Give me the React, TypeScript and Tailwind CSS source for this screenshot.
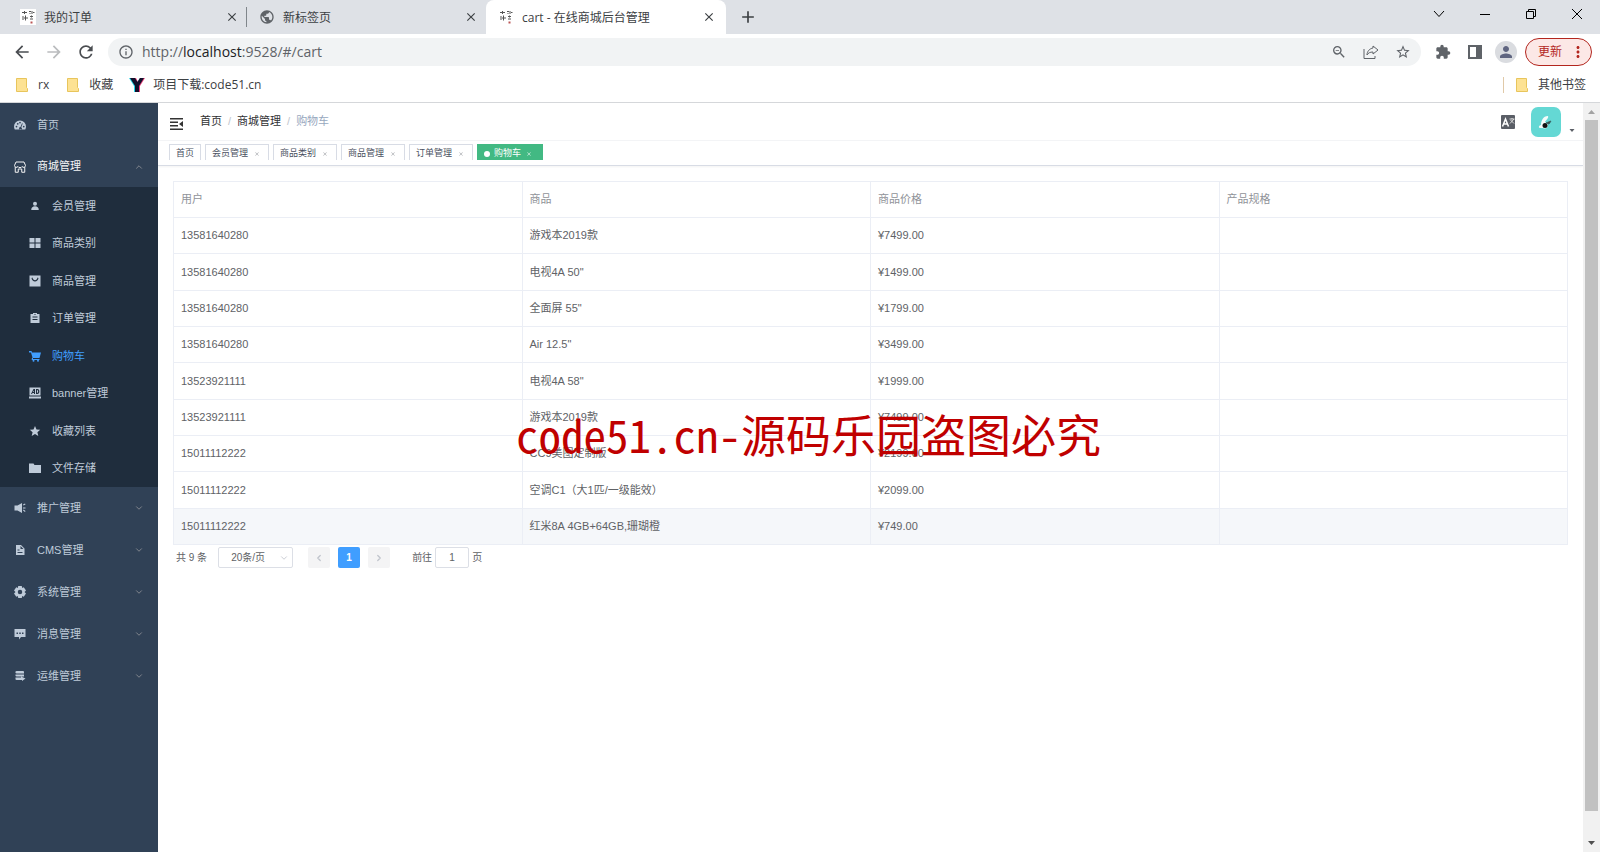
import type { ReactNode } from 'react'
import {
  MdAdd,
  MdArrowBack,
  MdArrowForward,
  MdClose,
  MdExtension,
  MdInfoOutline,
  MdMoreVert,
  MdPerson,
  MdPublic,
  MdRefresh,
  MdStarBorder,
  MdZoomOut,
} from 'react-icons/md'
import { ChevronDown, ChevronLeft, ChevronRight, ChevronUp } from 'lucide-react'

const rows = [
  ['13581640280', '游戏本2019款', '¥7499.00', ''],
  ['13581640280', '电视4A 50"', '¥1499.00', ''],
  ['13581640280', '全面屏 55"', '¥1799.00', ''],
  ['13581640280', 'Air 12.5"', '¥3499.00', ''],
  ['13523921111', '电视4A 58"', '¥1999.00', ''],
  ['13523921111', '游戏本2019款', '¥7499.00', ''],
  ['15011112222', 'CC9美图定制版', '¥2199.00', ''],
  ['15011112222', '空调C1（大1匹/一级能效）', '¥2099.00', ''],
  ['15011112222', '红米8A 4GB+64GB,珊瑚橙', '¥749.00', ''],
]

const Svg = ({ children, className = 'w-3 h-3' }: { children: ReactNode; className?: string }) => (
  <svg viewBox="0 0 24 24" fill="currentColor" className={className} aria-hidden="true">
    {children}
  </svg>
)

const icons: Record<string, ReactNode> = {
  home: (
    <Svg>
      <path
        fillRule="evenodd"
        d="M12 3a12 12 0 0 0-12 12c0 2 .5 4 1.500 6h21c1-2 1.500-4 1.500-6A12 12 0 0 0 12 3zM5 13.500a1.700 1.700 0 1 1 0 3.400 1.700 1.700 0 0 1 0-3.400zM7.500 8a1.700 1.700 0 1 1 0 3.400A1.700 1.700 0 0 1 7.500 8zM12 5.500a1.700 1.700 0 1 1 0 3.400 1.700 1.700 0 0 1 0-3.400zM16 8.500l1.500.7-3 7.500a2.800 2.800 0 1 1-1.500-.5zM19.500 13.500a1.700 1.700 0 1 1 0 3.400 1.700 1.700 0 0 1 0-3.400z"
      />
    </Svg>
  ),
  shop: (
    <Svg>
      <path
        fill="none"
        stroke="currentColor"
        strokeWidth="2"
        d="M4 2h16l3 7c0 4-5 5-7 2-1 3-7 3-8 0-2 3-7 2-7-2zM2.500 12v10.500h6V16h7v6.500h6V12"
      />
    </Svg>
  ),
  member: (
    <Svg>
      <circle cx="12" cy="7.500" r="4" />
      <path d="M4.500 20c0-5 3-7.500 7.500-7.500s7.500 2.500 7.500 7.500z" />
    </Svg>
  ),
  category: (
    <Svg>
      <path d="M1 2h10v9H1zM13 2h10v9H13zM1 13h10v9H1zM13 13h10v9H13z" />
    </Svg>
  ),
  goods: (
    <Svg>
      <path fillRule="evenodd" d="M1 1h22v22H1zM5 6c1 9 13 9 14 0l-2-1c-1 7-9 7-10 0z" />
    </Svg>
  ),
  order: (
    <Svg>
      <path fillRule="evenodd" d="M8 4V2h8v2h5v18H3V4zM7 9v2h10V9zM7 14v2h10v-2zM10 4v1h4V4z" />
    </Svg>
  ),
  cart: (
    <Svg>
      <path d="M0 2h5l1 3h18l-3 11H8v2h13v2H6l-1-2 2-3L4 5H0z" />
      <circle cx="9" cy="21.500" r="2" />
      <circle cx="18" cy="21.500" r="2" />
    </Svg>
  ),
  banner: (
    <Svg>
      <path
        fillRule="evenodd"
        d="M1 1h22v16H1zM4 14h2l1-2h3v2h2V4H9zM8 10l2-3v3zM14 4v10h3c5 0 5-10 0-10zM16 6c3 0 3 6 0 6z"
      />
      <path d="M0 19h24v4H0z" />
    </Svg>
  ),
  star: (
    <Svg>
      <path d="M12 2l3 7 7.500.6-5.700 5 1.800 7.400L12 18l-6.600 4 1.800-7.400-5.700-5L9 9z" />
    </Svg>
  ),
  folder: (
    <Svg>
      <path d="M0 3h9l2 3h13v16H0z" />
    </Svg>
  ),
  promote: (
    <Svg>
      <path d="M16 2v20L7 17H1V7h6zM18 5l4-2 1 2-4 2zM18 11h5v2h-5zM18 17l1-2 4 3-1 2z" />
    </Svg>
  ),
  cms: (
    <Svg>
      <path fillRule="evenodd" d="M4 2h10l7 7v13H4zM13 4v6h6zM7 11v2h4v-2zM7 16v2h10v-2z" />
    </Svg>
  ),
  system: (
    <Svg>
      <path
        fillRule="evenodd"
        d="M8.500 0h7l1 4 3-1.500L24 9l-3 3 3 3-4.500 6.500-3-1.500-1 4h-7l-1-4-3 1.500L0 15l3-3-3-3 4.500-6.500 3 1.500zM12 7.500a4.500 4.500 0 1 0 0 9 4.500 4.500 0 0 0 0-9z"
      />
    </Svg>
  ),
  message: (
    <Svg>
      <path fillRule="evenodd" d="M1 2h22v16h-9l-4 5v-5H1zM5 9v3h3V9zM10.500 9v3h3V9zM16 9v3h3V9z" />
    </Svg>
  ),
  ops: (
    <Svg>
      <path d="M3 3l2-1h13l2 1v4H5L3 6zM3 9h17v4H5l-2-1zM3 15h11v-2l9 4-7 5v-2H5l-2-1z" />
    </Svg>
  ),
}

const shopMenu = [
  { name: '会员管理', icon: 'member' },
  { name: '商品类别', icon: 'category' },
  { name: '商品管理', icon: 'goods' },
  { name: '订单管理', icon: 'order' },
  { name: '购物车', icon: 'cart', active: true },
  { name: 'banner管理', icon: 'banner' },
  { name: '收藏列表', icon: 'star' },
  { name: '文件存储', icon: 'folder' },
]

const otherMenus = [
  { name: '推广管理', icon: 'promote' },
  { name: 'CMS管理', icon: 'cms' },
  { name: '系统管理', icon: 'system' },
  { name: '消息管理', icon: 'message' },
  { name: '运维管理', icon: 'ops' },
]

const SealIcon = () => (
  <svg viewBox="0 0 16 16" className="w-4 h-4" fill="none" stroke="#555" aria-hidden="true">
    <path d="M2 3.500h5M4.500 2v3M9 2.500h2M9.500 4.500h1M12 2v3M13 3.500h1.500M2 8h2M2 10h2M5.500 6.500v5M4 9h4M10 7.500h3M11.500 6.500v2M10 10h3" />
    <path d="M10.500 13.500h2" stroke="#b55" strokeWidth="2" />
  </svg>
)

const FolderIcon = () => (
  <svg viewBox="0 0 12 14" className="w-3 h-3.5" aria-hidden="true">
    <path d="M.5.5h10v9l1 1v3H.5z" fill="#fde293" stroke="#e8c55c" />
  </svg>
)

function BrowserTab({ title, icon, active = false }: { title: string; icon: ReactNode; active?: boolean }) {
  return (
    <div
      className={
        active
          ? 'w-60 h-full flex items-center pl-3 pr-2.5 bg-white rounded-t-lg'
          : 'w-[239px] h-full flex items-center pl-3 pr-2'
      }
    >
      {icon}
      <span className="flex-1 ml-2 pt-0.5 whitespace-nowrap">{title}</span>
      <button aria-label="关闭标签页">
        <MdClose className="w-3.5 h-3.5" />
      </button>
    </div>
  )
}

function Browser() {
  return (
    <header className="font-['Open_Sans','Noto_Sans_CJK_SC',sans-serif] text-xs text-[#3c4043]">
      <div className="h-[34px] bg-[#dee1e6] flex items-center">
        <div className="flex h-full items-center pl-2">
          <BrowserTab
            title="我的订单"
            icon={
              <span className="bg-white">
                <SealIcon />
              </span>
            }
          />
          <span className="w-px h-5 -ml-px bg-[#80868b]" />
          <BrowserTab title="新标签页" icon={<MdPublic className="w-4 h-4 text-[#5f6368]" />} />
          <BrowserTab title="cart - 在线商城后台管理" icon={<SealIcon />} active />
        </div>
        <button className="ml-3" aria-label="新建标签页">
          <MdAdd className="w-5 h-5" />
        </button>
        <div className="ml-auto flex -mt-1.5 text-black">
          <button className="w-[46px] flex justify-center items-center" aria-label="搜索标签页">
            <svg viewBox="0 0 12 12" className="w-3 h-3" fill="none" stroke="currentColor">
              <path d="M1 3l5 5.500L11 3" />
            </svg>
          </button>
          <button className="w-[46px] flex justify-center items-center" aria-label="最小化">
            <svg viewBox="0 0 12 12" className="w-3 h-3" fill="none" stroke="currentColor">
              <path d="M1 6.500h10" />
            </svg>
          </button>
          <button className="w-[46px] flex justify-center items-center" aria-label="还原">
            <svg viewBox="0 0 12 12" className="w-3 h-3" fill="none" stroke="currentColor">
              <path d="M1.500 3.500h7v7h-7zM3.500 3.500v-2h7v7h-2" />
            </svg>
          </button>
          <button className="w-[46px] flex justify-center items-center" aria-label="关闭">
            <svg viewBox="0 0 12 12" className="w-3 h-3" fill="none" stroke="currentColor">
              <path d="M1 1l10 10M11 1L1 11" />
            </svg>
          </button>
        </div>
      </div>

      <div className="h-[35px] flex items-center pl-3 pr-2 text-[#5f6368]">
        <button aria-label="后退">
          <MdArrowBack className="w-5 h-5 text-[#4a4d51]" />
        </button>
        <button className="ml-3" aria-label="前进">
          <MdArrowForward className="w-5 h-5 text-[#babcbe]" />
        </button>
        <button className="ml-3" aria-label="重新加载">
          <MdRefresh className="w-5 h-5 text-[#4a4d51]" />
        </button>
        <div className="flex-1 h-7 ml-3 pl-2.5 pr-2.5 rounded-full bg-[#f1f3f4] flex items-center">
          <MdInfoOutline className="w-4 h-4" />
          <span className="flex-1 ml-2 text-sm">
            http://<span className="text-[#202124]">localhost</span>:9528/#/cart
          </span>
          <div className="flex gap-4">
            <MdZoomOut className="w-4 h-4" />
            <svg viewBox="0 0 16 16" className="w-4 h-4" fill="none" stroke="currentColor" strokeLinejoin="round">
              <path d="M1 5v9.500h11V12" />
              <path d="M10 2l5 4-5 4V8C7 8 5 9 4 11c0-4 3-6.500 6-7z" />
            </svg>
            <MdStarBorder className="w-4 h-4" />
          </div>
        </div>
        <MdExtension className="w-4 h-4 ml-3.5" />
        <svg viewBox="0 0 16 16" className="w-4 h-4 ml-4" aria-hidden="true">
          <path fillRule="evenodd" fill="currentColor" d="M1 1h14v14H1zM3 3v10h6V3z" />
        </svg>
        <span className="ml-3 w-[22px] h-[22px] rounded-full bg-[#dadce0] flex items-center justify-center">
          <MdPerson className="w-[18px] h-[18px] text-[#5f6580]" />
        </span>
        <button className="ml-2 h-7 w-[67px] pl-3 pr-1 rounded-full border border-[#b3261e] bg-[#fce8e6] text-[#b3261e] flex items-center justify-between">
          更新
          <MdMoreVert className="w-[18px] h-[18px]" />
        </button>
      </div>

      <div className="h-[34px] border-b border-[#d5d7da] pl-4 pr-3.5 pb-0.5 flex items-center">
        <a href="#" className="flex items-center gap-2.5">
          <FolderIcon />
          rx
        </a>
        <a href="#" className="ml-[18px] flex items-center gap-2.5">
          <FolderIcon />
          收藏
        </a>
        <a href="#" className="ml-4 flex items-center gap-2">
          <svg viewBox="0 0 16 16" className="w-4 h-4" aria-hidden="true">
            <path d="M0 1h5l3 4 3-4h4l-5 7v7H5V9z" fill="#25d6e8" />
            <path d="M2 1h5l2 4 2-4h5l-5 8v6H7V9z" fill="#f0407c" />
            <path d="M1 1h5l2.500 4L11 1h4l-5 8v6H6V9z" fill="#12102c" />
          </svg>
          项目下载:code51.cn
        </a>
        <a href="#" className="ml-auto h-4 pl-3 border-l border-[#e0c9a8] flex items-center gap-2.5">
          <FolderIcon />
          其他书签
        </a>
      </div>
    </header>
  )
}

function Sidebar() {
  return (
    <nav className="w-[158px] shrink-0 pt-px bg-[#304156] text-[#bfcbd9]">
      <a href="#" className="h-[42px] pl-3.5 flex items-center gap-[11px]">
        {icons.home}
        首页
      </a>
      <button className="w-full h-[41px] pl-3.5 pr-3.5 flex items-center gap-[11px] text-[#f4f4f5]">
        {icons.shop}
        <span className="flex-1 text-left">商城管理</span>
        <ChevronUp className="w-2.5 h-2.5 text-[#909399]" strokeWidth={2} />
      </button>
      <ul className="h-[300px] flex flex-col bg-[#1f2d3d]">
        {shopMenu.map((m) => (
          <li key={m.name} className="flex-1 flex">
            <a
              href="#"
              className={
                m.active
                  ? 'flex-1 pl-[29px] flex items-center gap-[11px] text-[#409eff]'
                  : 'flex-1 pl-[29px] flex items-center gap-[11px]'
              }
            >
              {icons[m.icon]}
              {m.name}
            </a>
          </li>
        ))}
      </ul>
      {otherMenus.map((m) => (
        <button key={m.name} className="w-full h-[42px] pl-3.5 pr-3.5 flex items-center gap-[11px]">
          {icons[m.icon]}
          <span className="flex-1 text-left">{m.name}</span>
          <ChevronDown className="w-2.5 h-2.5 text-[#909399]" strokeWidth={2} />
        </button>
      ))}
    </nav>
  )
}

function Navbar() {
  return (
    <div className="h-[38px] pl-3 pr-[7px] flex items-center border-b border-[#f3f4f6]">
      <button aria-label="收起菜单" className="mt-1">
        <svg viewBox="0 0 14 12" className="w-3.5 h-3" fill="#333" aria-hidden="true">
          <path d="M0 0h13v1.500H0zM0 3.500h8V5H0zM0 7h8v1.500H0zM0 10.500h13V12H0zM13 3v6L9 6z" />
        </svg>
      </button>
      <div className="ml-4 flex gap-1.5 text-[#303133]">
        <a href="#">首页</a>
        <span className="text-[#c0c4cc]">/</span>
        <a href="#">商城管理</a>
        <span className="text-[#c0c4cc]">/</span>
        <span className="text-[#97a8be]">购物车</span>
      </div>
      <button className="ml-auto" aria-label="语言">
        <svg viewBox="0 0 14 14" className="w-3.5 h-3.5" aria-hidden="true">
          <rect width="14" height="14" rx="1" fill="#5a5e66" />
          <path d="M1.500 11.500L4.500 4l3 7.500M3 9h3" fill="none" stroke="#fff" strokeWidth="1.500" />
          <path d="M8.500 4h5M11 3v1M9 8.500L13 4M9.500 5L13 8.500" fill="none" stroke="#ddd" />
        </svg>
      </button>
      <button className="ml-4 flex items-end gap-[7px]" aria-label="用户菜单">
        <svg viewBox="0 0 30 30" className="w-[30px] h-[30px]" aria-hidden="true">
          <rect width="30" height="30" rx="7" fill="#64d8d4" />
          <path d="M9 21c-2 0-1-3 1-3 0-4 2-9 7-9 1 2-2 4-3 6l3 2-1 4c-3 1-4 0-7 0z" fill="#f4fbfa" />
          <circle cx="14" cy="18.500" r="2.500" fill="#111" />
          <path d="M15 16l5-2-2 3z" fill="#333" stroke="#3a6a6a" />
        </svg>
        <svg viewBox="0 0 8 8" className="w-2 h-2 mb-0.5" fill="#5a5e66" aria-hidden="true">
          <path d="M1.500 2h5L4 5z" />
        </svg>
      </button>
    </div>
  )
}

function TagsView() {
  return (
    <div className="h-[25px] pl-[11px] pt-[3px] border-b border-[#d8dce5] shadow-xs text-[9px] text-[#495060]">
      <div className="h-4 flex gap-1 overflow-hidden">
        <a href="#" className="h-5 w-8 flex items-center justify-center border border-[#d8dce5]">
          首页
        </a>
        {['会员管理', '商品类别', '商品管理', '订单管理'].map((t) => (
          <a key={t} href="#" className="h-5 w-16 pl-1.5 pr-2 flex items-center justify-between border border-[#d8dce5]">
            {t}
            <MdClose className="w-1.5 h-1.5 text-[#909399]" />
          </a>
        ))}
        <a
          href="#"
          className="h-5 w-[66px] pl-1.5 pr-2.5 flex items-center border border-[#42b983] bg-[#42b983] text-white"
        >
          <span className="w-1.5 h-1.5 rounded-full bg-white mr-1" />
          <span className="flex-1">购物车</span>
          <MdClose className="w-1.5 h-1.5" />
        </a>
      </div>
    </div>
  )
}

function Pagination() {
  return (
    <div className="mt-0.5 pl-[3px] flex items-center text-[10px] text-[#606266]">
      <span>共 9 条</span>
      <div className="relative ml-[11px]">
        <select
          aria-label="每页条数"
          className="appearance-none block w-[75px] h-[21px] pl-3 border border-[#dcdfe6] rounded-xs bg-white"
        >
          <option>20条/页</option>
        </select>
        <ChevronDown className="absolute right-1 top-1.5 w-2.5 h-2.5 text-[#c0c4cc]" strokeWidth={2} />
      </div>
      <div className="ml-[15px] flex gap-2">
        <button
          disabled
          aria-label="上一页"
          className="w-[22px] h-[21px] rounded-xs bg-[#f4f4f5] flex items-center justify-center text-[#c0c4cc]"
        >
          <ChevronLeft className="w-2.5 h-2.5" strokeWidth={3} />
        </button>
        <button className="w-[22px] h-[21px] rounded-xs bg-[#409eff] text-white font-bold">1</button>
        <button
          disabled
          aria-label="下一页"
          className="w-[22px] h-[21px] rounded-xs bg-[#f4f4f5] flex items-center justify-center text-[#c0c4cc]"
        >
          <ChevronRight className="w-2.5 h-2.5" strokeWidth={3} />
        </button>
      </div>
      <label className="ml-[22px] flex items-center gap-[3px]">
        前往
        <input
          defaultValue="1"
          className="w-[34px] h-[21px] border border-[#dcdfe6] rounded-xs text-center"
        />
        页
      </label>
    </div>
  )
}

export default function App() {
  return (
    <div className="min-h-screen flex flex-col bg-white">
      <Browser />
      <div className="flex-1 flex font-['Liberation_Sans','Noto_Sans_CJK_SC',sans-serif] text-[11px]">
        <Sidebar />
        <main className="flex-1 min-w-0">
          <Navbar />
          <TagsView />
          <div className="pt-[15px] px-[15px]">
            <div className="relative">
              <table className="w-full table-fixed border-collapse text-left text-[#606266]">
                <thead className="text-[#909399]">
                  <tr className="h-9">
                    {['用户', '商品', '商品价格', '产品规格'].map((h) => (
                      <th key={h} className="px-[7px] border border-[#ebeef5] font-normal">
                        {h}
                      </th>
                    ))}
                  </tr>
                </thead>
                <tbody>
                  {rows.map((row, i) => (
                    <tr
                      key={i}
                      className={i === rows.length - 1 ? 'h-9 bg-[#f5f7fa]' : i % 3 === 1 ? 'h-[37px]' : 'h-9'}
                    >
                      {row.map((cell, j) => (
                        <td key={j} className="px-[7px] border border-[#ebeef5]">
                          {cell}
                        </td>
                      ))}
                    </tr>
                  ))}
                </tbody>
              </table>
              <div className="absolute left-[343px] top-[220px] whitespace-nowrap font-['Noto_Sans_Mono_CJK_SC','Noto_Sans_CJK_SC',monospace] text-[45px] leading-[66px] text-[#c00000]">
                code51.cn-源码乐园盗图必究
              </div>
            </div>
            <Pagination />
          </div>
        </main>
        <div className="w-[17px] shrink-0 bg-[#f1f1f1] flex flex-col items-center text-[#505050]">
          <svg viewBox="0 0 17 17" className="w-[17px] h-[17px]" fill="#a3a3a3" aria-hidden="true">
            <path d="M5 11h7L8.500 7z" />
          </svg>
          <div className="flex-1 w-[13px] bg-[#c1c1c1]" />
          <svg viewBox="0 0 17 17" className="w-[17px] h-[17px] mt-6" fill="currentColor" aria-hidden="true">
            <path d="M5 6h7l-3.500 4z" />
          </svg>
        </div>
      </div>
    </div>
  )
}
